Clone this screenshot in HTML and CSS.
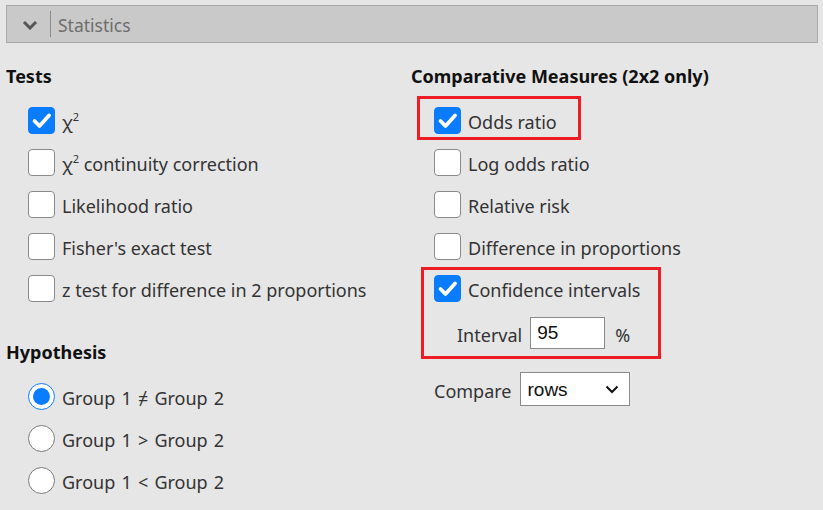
FILE: index.html
```html
<!DOCTYPE html>
<html>
<head>
<meta charset="utf-8">
<link rel="stylesheet" href="styles.css">
</head>
<body>
<div class="header">
  <svg class="chev" width="16" height="10" viewBox="0 0 16 10"><path d="M2 2 L8 8 L14 2" fill="none" stroke="#555" stroke-width="3"/></svg>
  <span class="divider"></span>
  <span class="title">Statistics</span>
</div>
<div class="panel">
  <div class="col col-left">
    <div class="heading">Tests</div>
    <div class="rows">
      <div class="row"><span class="cb checked"><svg viewBox="0 0 27 27" width="27" height="27"><path d="M6.5 14 L11.5 19 L21 8.5" fill="none" stroke="#fff" stroke-width="3.8" stroke-linecap="round" stroke-linejoin="round"/></svg></span><span class="lbl">χ<sup>2</sup></span></div>
      <div class="row"><span class="cb"></span><span class="lbl">χ<sup>2</sup> continuity correction</span></div>
      <div class="row"><span class="cb"></span><span class="lbl">Likelihood ratio</span></div>
      <div class="row"><span class="cb"></span><span class="lbl">Fisher's exact test</span></div>
      <div class="row"><span class="cb"></span><span class="lbl">z test for difference in 2 proportions</span></div>
    </div>
    <div class="heading heading-hyp">Hypothesis</div>
    <div class="rows">
      <div class="row"><span class="rd checked"></span><span class="lbl grp">Group 1 ≠ Group 2</span></div>
      <div class="row"><span class="rd"></span><span class="lbl grp">Group 1 &gt; Group 2</span></div>
      <div class="row"><span class="rd"></span><span class="lbl grp">Group 1 &lt; Group 2</span></div>
    </div>
  </div>
  <div class="col col-right">
    <div class="heading">Comparative Measures (2x2 only)</div>
    <div class="rows">
      <div class="row hl hl-odds"><span class="cb checked"><svg viewBox="0 0 27 27" width="27" height="27"><path d="M6.5 14 L11.5 19 L21 8.5" fill="none" stroke="#fff" stroke-width="3.8" stroke-linecap="round" stroke-linejoin="round"/></svg></span><span class="lbl">Odds ratio</span></div>
      <div class="row"><span class="cb"></span><span class="lbl">Log odds ratio</span></div>
      <div class="row"><span class="cb"></span><span class="lbl">Relative risk</span></div>
      <div class="row"><span class="cb"></span><span class="lbl">Difference in proportions</span></div>
      <div class="group hl hl-ci">
        <div class="row"><span class="cb checked"><svg viewBox="0 0 27 27" width="27" height="27"><path d="M6.5 14 L11.5 19 L21 8.5" fill="none" stroke="#fff" stroke-width="3.8" stroke-linecap="round" stroke-linejoin="round"/></svg></span><span class="lbl">Confidence intervals</span></div>
        <div class="interval-row"><span class="lbl">Interval</span><span class="textbox">95</span><span class="lbl pct">%</span></div>
      </div>
      <div class="compare-row"><span class="lbl">Compare</span><span class="select">rows<svg class="sel-chev" width="14" height="9" viewBox="0 0 14 9"><path d="M1.5 1.5 L7 7 L12.5 1.5" fill="none" stroke="#111" stroke-width="2"/></svg></span></div>
    </div>
  </div>
</div>
</body>
</html>
```
FILE: styles.css
```css
html, body {
  margin: 0;
  padding: 0;
  background: #e6e6e6;
}
body {
  font-family: "Noto Sans", "Open Sans", sans-serif;
  color: #333;
  width: 823px;
  height: 510px;
  overflow: hidden;
}
.header {
  margin: 5px 5px 0 6px;
  height: 36px;
  border: 1px solid #a9a9a9;
  background: #c9c9c9;
  display: flex;
  align-items: center;
}
.chev {
  margin-left: 15px;
  margin-top: 1px;
}
.divider {
  width: 1px;
  height: 26px;
  background: #8c8c8c;
  margin-left: 12px;
}
.title {
  margin-left: 7px;
  margin-top: 2px;
  font-size: 17.5px;
  color: #6e6e6e;
}
.panel {
  display: flex;
  padding: 21px 6px 0 6px;
}
.col-left {
  width: 405px;
}
.col-right {
  flex: 1;
}
.heading {
  height: 24px;
  line-height: 24px;
  font-weight: bold;
  font-size: 18px;
  color: #111;
  margin-bottom: 11px;
}
.heading-hyp {
  margin-top: 31px;
}
.row {
  height: 42px;
  display: flex;
  align-items: center;
  padding-left: 22px;
}
.col-right .row {
  padding-left: 23px;
}
.lbl {
  font-size: 18px;
  color: #333;
  white-space: nowrap;
  padding-top: 4px;
}
.grp {
  word-spacing: 1.5px;
}
.lbl sup {
  font-size: 11px;
  vertical-align: 8px;
  line-height: 0;
}
.cb {
  width: 25px;
  height: 25px;
  border: 1px solid #8a8a8a;
  border-radius: 4px;
  background: #fff;
  margin-right: 7px;
  position: relative;
  flex: none;
}
.cb.checked {
  background: #0a7cff;
  border-color: #0a7cff;
}
.cb svg {
  position: absolute;
  left: -1px;
  top: -1px;
}
.rd {
  width: 25px;
  height: 25px;
  border: 1px solid #7a7a7a;
  border-radius: 50%;
  background: #fff;
  margin-right: 7px;
  flex: none;
  box-sizing: content-box;
  position: relative;
}
.rd.checked {
  border-color: #0a7cff;
}
.rd.checked::after {
  content: "";
  position: absolute;
  left: 4px;
  top: 4px;
  width: 17px;
  height: 17px;
  border-radius: 50%;
  background: #0a7cff;
}
.hl {
  position: relative;
}
.hl::before {
  content: "";
  position: absolute;
  border: 3px solid #ee1d25;
  pointer-events: none;
}
.hl-odds::before {
  left: 6px;
  top: -3px;
  width: 158px;
  height: 38px;
}
.hl-ci::before {
  left: 10px;
  top: 0;
  width: 234px;
  height: 86px;
}
.interval-row {
  height: 48px;
  display: flex;
  align-items: center;
  padding-left: 46px;
}
.textbox {
  margin-left: 8px;
  width: 67px;
  height: 30px;
  border: 1px solid #8a8a8a;
  background: #fff;
  font-family: "Liberation Sans", Arial, sans-serif;
  font-size: 19px;
  line-height: 30px;
  padding-left: 6px;
  box-sizing: content-box;
  color: #111;
}
.pct {
  margin-left: 10px;
}
.compare-row {
  margin-top: 11px;
  height: 42px;
  display: flex;
  align-items: center;
  padding-left: 23px;
}
.select {
  margin-left: 8px;
  width: 101px;
  height: 32px;
  border: 1px solid #8a8a8a;
  background: #fff;
  font-family: "Liberation Sans", Arial, sans-serif;
  font-size: 19px;
  line-height: 33px;
  padding-left: 7px;
  color: #111;
  position: relative;
}
.sel-chev {
  position: absolute;
  right: 10px;
  top: 12px;
}
```
